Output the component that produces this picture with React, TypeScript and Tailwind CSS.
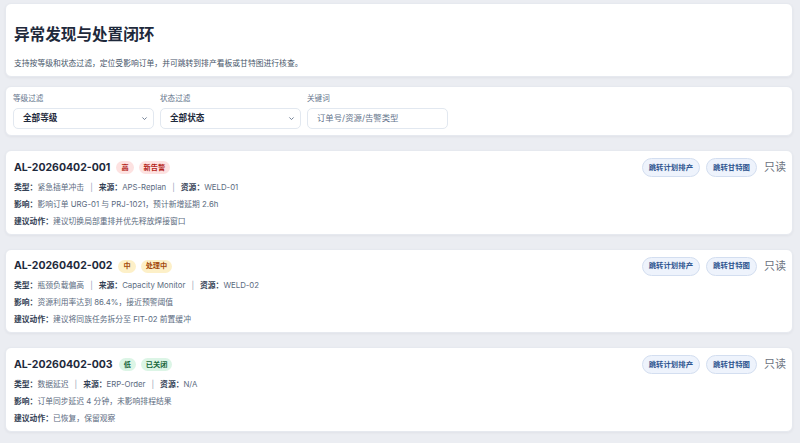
import { type ReactNode } from 'react';

type Tone = 'red' | 'amber' | 'green';

interface Alert {
  id: string;
  level: string;
  status: string;
  tone: Tone;
  type: string;
  source: string;
  resource: string;
  impact: string;
  action: string;
}

const alerts: Alert[] = [
  {
    id: 'AL-20260402-001',
    level: '高',
    status: '新告警',
    tone: 'red',
    type: '紧急插单冲击',
    source: 'APS-Replan',
    resource: 'WELD-01',
    impact: '影响订单 URG-01 与 PRJ-1021，预计新增延期 2.6h',
    action: '建议切换局部重排并优先释放焊接窗口',
  },
  {
    id: 'AL-20260402-002',
    level: '中',
    status: '处理中',
    tone: 'amber',
    type: '瓶颈负载偏高',
    source: 'Capacity Monitor',
    resource: 'WELD-02',
    impact: '资源利用率达到 86.4%，接近预警阈值',
    action: '建议将同族任务拆分至 FIT-02 前置缓冲',
  },
  {
    id: 'AL-20260402-003',
    level: '低',
    status: '已关闭',
    tone: 'green',
    type: '数据延迟',
    source: 'ERP-Order',
    resource: 'N/A',
    impact: '订单同步延迟 4 分钟，未影响排程结果',
    action: '已恢复，保留观察',
  },
];

const badgeTone: Record<Tone, string> = {
  red: 'bg-[#fde2e1] text-[#b42318]',
  amber: 'bg-[#fdf0c8] text-[#a44a0c]',
  green: 'bg-[#dcf5e6] text-[#17663a]',
};

function Badge({ tone, children }: { tone: Tone; children: ReactNode }) {
  return (
    <span className={`inline-flex items-center h-[13px] px-[5px] rounded-full text-[7.2px] font-semibold leading-none ${badgeTone[tone]}`}>
      {children}
    </span>
  );
}

function Label({ children }: { children: ReactNode }) {
  return <span className="font-semibold text-[#334155]">{children}</span>;
}

function Sep() {
  return <span className="mx-[6px] text-[#94a3b8]">|</span>;
}

function Control({ text, placeholder, chevron }: { text: string; placeholder?: boolean; chevron?: boolean }) {
  return (
    <div className="flex items-center justify-between h-[21px] w-[141px] rounded-[5px] border border-[#e2e8f0] bg-white pl-[9px] pr-[5px]">
      <span className={placeholder ? 'text-[8.4px] text-[#64748b]' : 'text-[8.6px] font-semibold text-[#1e293b]'}>{text}</span>
      {chevron && (
        <svg width="7" height="7" viewBox="0 0 10 10" fill="none" stroke="#64748b" strokeWidth="1.3">
          <path d="M2 3.5 5 6.5 8 3.5" />
        </svg>
      )}
    </div>
  );
}

function AlertCard({ a }: { a: Alert }) {
  return (
    <div className="rounded-[6px] bg-white border border-[#e6e9ef] shadow-[0_1px_3px_rgba(15,23,42,0.05)] pl-[8px] pr-[6px] pt-[7px] pb-[4px]">
      <div className="flex items-center justify-between h-[19px]">
        <div className="flex items-center gap-[5px]">
          <span className="text-[10.5px] font-bold text-[#1e293b] mr-[1px]">{a.id}</span>
          <Badge tone={a.tone}>{a.level}</Badge>
          <Badge tone={a.tone}>{a.status}</Badge>
        </div>
        <div className="flex items-center gap-[6px]">
          <button className="h-[19px] px-[6px] rounded-full bg-[#eef3fc] border border-[#d3def0] text-[7.4px] font-semibold text-[#2f5590]">跳转计划排产</button>
          <button className="h-[19px] px-[6px] rounded-full bg-[#eef3fc] border border-[#d3def0] text-[7.4px] font-semibold text-[#2f5590]">跳转甘特图</button>
          <span className="ml-[1px] text-[11px] text-[#6b7280]">只读</span>
        </div>
      </div>
      <div className="mt-[1.5px] text-[7.8px] leading-[17px] text-[#5b6b80]">
        <div>
          <Label>类型：</Label>{a.type}<Sep /><Label>来源：</Label>{a.source}<Sep /><Label>资源：</Label>{a.resource}
        </div>
        <div>
          <Label>影响：</Label>{a.impact}
        </div>
        <div>
          <Label>建议动作：</Label>{a.action}
        </div>
      </div>
    </div>
  );
}

export default function App() {
  return (
    <div
      className="min-h-screen bg-[#ebedf2] pl-[5px] pr-[7px] pt-[3px] pb-[10px]"
      style={{ fontFamily: 'Inter, "Noto Sans CJK SC", sans-serif' }}
    >
      <div className="rounded-[6px] bg-white border border-[#e6e9ef] shadow-[0_1px_3px_rgba(15,23,42,0.05)] px-[8px] pt-[19px] pb-[7px]">
        <h1 className="text-[15.6px] leading-[24px] font-bold text-[#1e293b]">异常发现与处置闭环</h1>
        <p className="mt-[10px] text-[7.8px] leading-[12px] text-[#475569]">
          支持按等级和状态过滤，定位受影响订单，并可跳转到排产看板或甘特图进行核查。
        </p>
      </div>

      <div className="mt-[9px] rounded-[6px] bg-white border border-[#e6e9ef] shadow-[0_1px_3px_rgba(15,23,42,0.05)] px-[7px] pt-[7px] pb-[6px]">
        <div className="flex gap-[6px]">
          <div>
            <div className="text-[7.6px] leading-[10px] text-[#64748b] mb-[4px]">等级过滤</div>
            <Control text="全部等级" chevron />
          </div>
          <div>
            <div className="text-[7.6px] leading-[10px] text-[#64748b] mb-[4px]">状态过滤</div>
            <Control text="全部状态" chevron />
          </div>
          <div>
            <div className="text-[7.6px] leading-[10px] text-[#64748b] mb-[4px]">关键词</div>
            <Control text="订单号/资源/告警类型" placeholder />
          </div>
        </div>
      </div>

      <div className="mt-[14px] flex flex-col gap-[14px]">
        {alerts.map((a) => (
          <AlertCard key={a.id} a={a} />
        ))}
      </div>
    </div>
  );
}
